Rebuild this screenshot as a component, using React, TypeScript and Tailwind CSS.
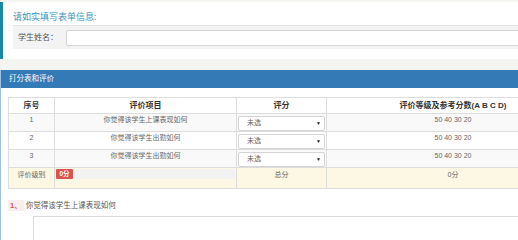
import React from "react";

const rows = [
  { no: 1, title: "你觉得该学生上课表现如何", bg: "bg-[#f9f9f9]" },
  { no: 2, title: "你觉得该学生出勤如何", bg: "bg-white" },
  { no: 3, title: "你觉得该学生出勤如何", bg: "bg-[#f9f9f9]" },
];

const Select = () => (
  <div className="mx-[1px] mt-[2px] h-[15px] flex items-center justify-between bg-white border border-[#d4d4d4] rounded-[2px] pl-[8px] pr-[3px] text-[7px] text-[#666]">
    <span>未选</span>
    <span className="text-[5px] text-[#222]">▼</span>
  </div>
);

const App = () => {
  return (
    <div className="w-[518px] h-[240px] overflow-hidden bg-[#f4f4f1] font-['Liberation_Sans','Noto_Sans_CJK_SC',sans-serif]">
      <div className="w-[600px]">
        {/* form info */}
        <section className="mt-[2px] h-[57px] bg-white border-l-[3px] border-[#1a88a6] pl-[10px] pt-[9px]">
          <h3 className="text-[9px] leading-[12px] text-[#3a93c0]">请如实填写表单信息:</h3>
          <div className="mt-[2px] h-[24px] bg-[#f3f3f3] border-t border-[#e3e3e3] flex items-center pl-[5px]">
            <span className="w-[48px] text-[8px] text-[#555]">学生姓名：</span>
            <div className="flex-1 h-[16px] bg-white border border-[#d6d6d6] rounded-[2px]" />
          </div>
        </section>

        {/* score panel */}
        <section className="mt-[11px] h-[200px] bg-white border-l border-[#9fc2e3]">
          <div className="h-[18px] bg-[#337ab7] flex items-center pl-[8px] text-[7.5px] text-white">
            打分表和评价
          </div>
          <div className="pl-[7px] pt-[9px]">
            <table className="w-[572px] border-collapse text-[7px] text-[#666] border border-[#ddd]">
              <thead>
                <tr className="h-[16px] bg-white text-[8px] font-bold text-[#333]">
                  <th className="w-[46px] border border-[#ddd]">序号</th>
                  <th className="w-[182px] border border-[#ddd]">评价项目</th>
                  <th className="w-[90px] border border-[#ddd]">评分</th>
                  <th className="border border-[#ddd]">评价等级及参考分数(A B C D)</th>
                </tr>
              </thead>
              <tbody>
                {rows.map((r) => (
                  <tr key={r.no} className={`h-[18px] ${r.bg}`}>
                    <td className="border border-[#ddd] text-center align-top pt-[1px]">{r.no}</td>
                    <td className="border border-[#ddd] text-center align-top pt-[1px]">{r.title}</td>
                    <td className="border border-[#ddd] align-top p-0">
                      <Select />
                    </td>
                    <td className="border border-[#ddd] text-center align-top pt-[1px]">50 40 30 20</td>
                  </tr>
                ))}
                <tr className="h-[21px] bg-[#fcf8e3]">
                  <td className="border border-[#ddd] text-center align-top pt-[2px]">评价级别</td>
                  <td className="border border-[#ddd] align-top pt-[1px] px-[1px]">
                    <div className="h-[10px] bg-[#f2f2f2] flex">
                      <span className="w-[17px] bg-[#d9534f] text-white text-[6.5px] font-bold flex items-center justify-center rounded-[1px]">
                        0分
                      </span>
                    </div>
                  </td>
                  <td className="border border-[#ddd] text-center align-top pt-[2px]">总分</td>
                  <td className="border border-[#ddd] text-center align-top pt-[2px]">0分</td>
                </tr>
              </tbody>
            </table>

            <div className="mt-[11px] flex items-center text-[7.5px]">
              <span className="px-[2px] bg-[#f9eeee] text-[#d9534f] font-bold">1、</span>
              <span className="ml-[2px] text-[#555]">你觉得该学生上课表现如何</span>
            </div>
            <div className="ml-[25px] mt-[5px] h-[40px] border border-[#dcdcdc]" />
          </div>
        </section>
      </div>
    </div>
  );
};

export default App;
